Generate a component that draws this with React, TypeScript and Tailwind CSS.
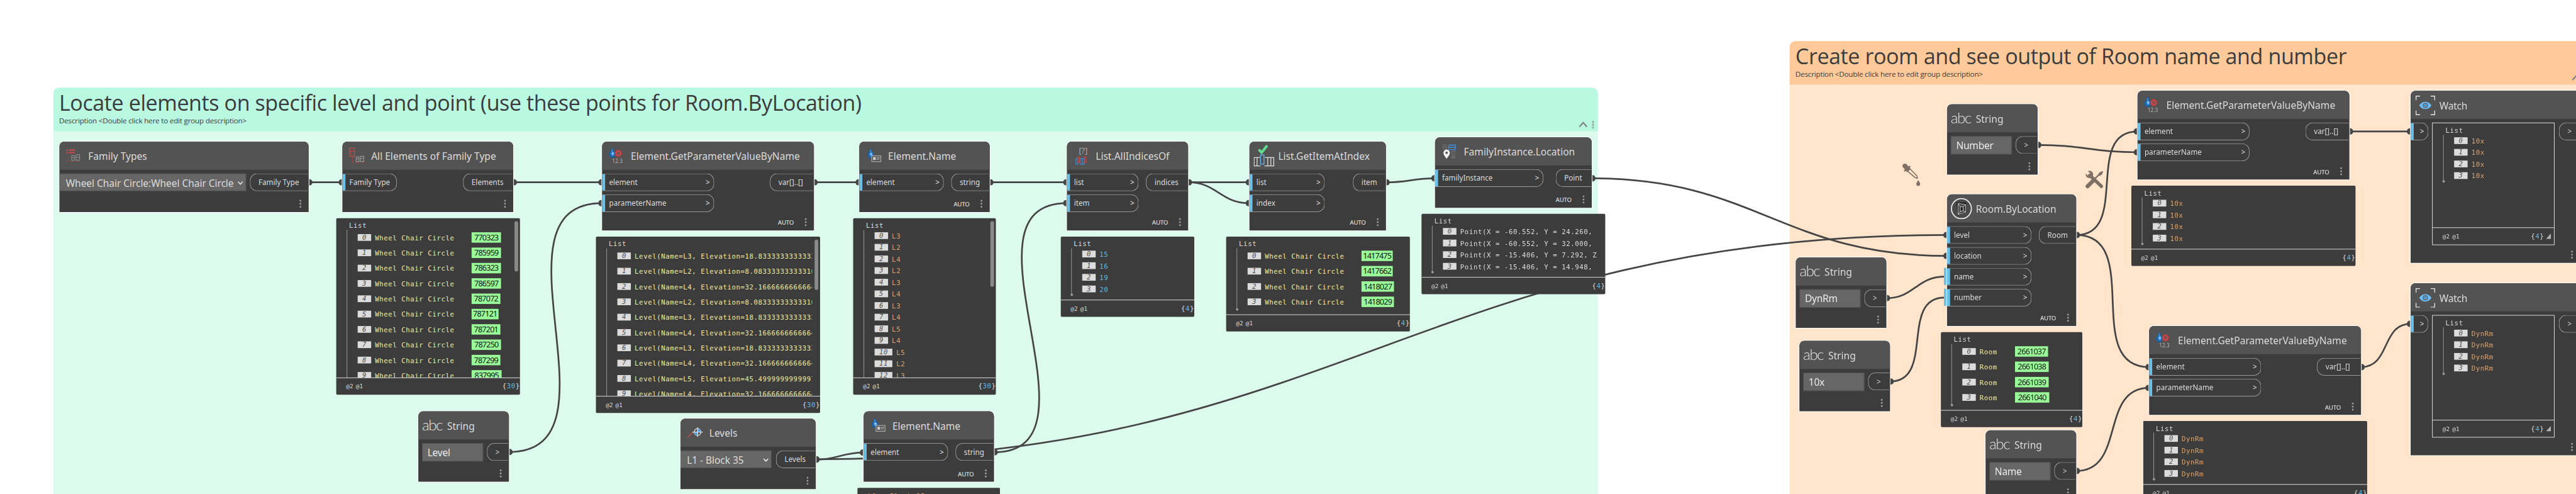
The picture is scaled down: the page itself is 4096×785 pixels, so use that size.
import React from "react";

/* ---------- icons ---------- */

const Vase = () => (
  <>
    <path d="M2.800 0h5.600v1.600h-.8v2.600c2.200 1 3.600 2.700 3.600 5.200 0 2.800-1.400 5-3.400 6H3.600C1.500 14.400.2 12.200.2 9.400c0-2.500 1.400-4.200 3.400-5.200V1.600h-.8z" fill="#1d5f9f" />
    <path d="M4.600 1.500h1.800v4H4.600z" fill="#4a90cf" />
    <ellipse cx="6.200" cy="8.800" rx="2.900" ry="3.600" fill="#3f8fd6" />
    <ellipse cx="6.600" cy="8.400" rx="1.300" ry="1.700" fill="#a9d4f7" />
  </>
);

const FamilyTypesIcon = () => (
  <svg width="24" height="22" viewBox="0 0 24 22" fill="none">
    <path d="M0 2h3M4.500 2h10M0 6h2.500M4.500 6h9.500" stroke="#cf4a4a" strokeWidth="2" />
    <path d="M2.500 8v12M2.500 20.500h20.500" stroke="#a84545" strokeWidth="1" strokeDasharray="1.500 1" />
    <path d="M9 11h4.500v7.500H9zM9 14.500h4.500M16 9.500h6v9h-6zM16 13.500h6" stroke="#8d8d8d" strokeWidth="1.200" />
  </svg>
);

const AllElementsIcon = () => (
  <svg width="26" height="26" viewBox="0 0 26 26" fill="none">
    <path d="M.7.7h8v13.200h-8zM.7 5.500h8M3 8v3" stroke="#cf4a4a" strokeWidth="1.300" />
    <path d="M5.500 15v9M5.500 24.300H25" stroke="#c04848" strokeWidth="1" strokeDasharray="1.500 1" />
    <path d="M11.500 15h4.500v7.500h-4.500zM11.500 18.500H16M18.500 14h5.500v8.500h-5.500zM18.500 17.500H24" stroke="#999" strokeWidth="1.200" />
  </svg>
);

const GetParameterIcon = () => (
  <svg width="24" height="25" viewBox="0 0 24 25" fill="none">
    <Vase />
    <circle cx="15.500" cy="8.200" r="5.300" stroke="#c9393c" strokeWidth="2" strokeDasharray="2.100 2.060" />
    <circle cx="15.500" cy="8.200" r="3.500" fill="#535353" stroke="#d9464a" strokeWidth="2" />
    <circle cx="15.500" cy="8.200" r="1" fill="#d9464a" />
    <text x="5.500" y="23.500" fontSize="8.500" fill="#b5b5b5" fontFamily="Noto Sans, sans-serif" textLength="17">12.3</text>
  </svg>
);

const ElementNameIcon = () => (
  <svg width="24" height="22" viewBox="0 0 24 22" fill="none">
    <Vase />
    <path d="M7.300 11.300h14.800v9.400H7.300z" fill="#535353" stroke="#a8a8a8" strokeWidth="1.300" />
    <path d="M9.500 13.500h4.500v4.500H9.500z" fill="#cfcfcf" />
    <path d="M15.500 14.500h5M15.500 17h4" stroke="#cfcfcf" />
  </svg>
);

const AllIndicesIcon = () => (
  <svg width="22" height="31" viewBox="0 0 22 31" fill="none">
    <text x="5.500" y="11.500" fontSize="12" fill="#b0b0b0" fontFamily="Noto Sans, sans-serif" textLength="14">[?]</text>
    <path d="M.8 20h3v9h-3zM7.500 20h3.500v9H7.500zM11 20h3.500v9H11z" stroke="#3f8fd6" strokeWidth="1.300" />
    <path d="M4 17h3v9H4zM14 17h3v9h-3z" stroke="#cc4444" strokeWidth="1.300" />
  </svg>
);

const GetItemIcon = () => (
  <svg width="34" height="36" viewBox="0 0 34 36" fill="none">
    <path d="M8.300 8l4.700 5L22 1.500" stroke="#5fe08f" strokeWidth="4" />
    <path d="M11 34.700H.7V21h9.500M5.500 21v13.700M17.500 34.700h15.300V21H18.500M23 21v13.700M28 21v13.700" stroke="#e0e0e0" strokeWidth="1.300" />
    <path d="M11.200 17h5.600v14.800h-5.600z" stroke="#6ab8f5" strokeWidth="1.300" />
  </svg>
);

const LocationIcon = () => (
  <svg width="24" height="25" viewBox="0 0 24 25" fill="none">
    <path d="M1.500 1.500H7v7H1.500zM1.500 5H7M15.500 12h5v4.500h-5zM15.500 19h5v4h-5zM15.500 21h5" stroke="#757575" />
    <path d="M10.700 1.700h10.600v7.600H10.700zM10.700 5.500h10.600" stroke="#3f8fd6" strokeWidth="1.400" />
    <path d="M7 9.200a5.200 5.200 0 0 1 5.200 5.200c0 3.400-3.200 6-5.200 10-2-4-5.200-6.600-5.200-10A5.200 5.200 0 0 1 7 9.200z" fill="#f4f4f4" />
    <circle cx="7" cy="14.200" r="2" fill="#555" />
  </svg>
);

const LevelsIcon = () => (
  <svg width="26" height="18" viewBox="0 0 26 18" fill="none">
    <path d="M.5 17L9 8.500" stroke="#c05050" strokeWidth="1.400" />
    <circle cx="17" cy="8" r="5.500" fill="#555" stroke="#ddd" strokeWidth="1.300" />
    <path d="M17 2.500a5.500 5.500 0 0 1 5.500 5.500H17zM17 13.500A5.500 5.500 0 0 1 11.500 8H17z" fill="#3f9bea" />
    <path d="M8.500 8h17M17 0v16" stroke="#e4e4e4" strokeWidth="1.300" />
  </svg>
);

const RoomIcon = () => (
  <svg width="35" height="35" viewBox="0 0 35 35" fill="none">
    <circle cx="17.500" cy="17.500" r="16.300" fill="#4a4a4a" stroke="#ececec" strokeWidth="1.800" />
    <path d="M10.500 8.500h14v14L12 27z" fill="#3a3a3a" stroke="#222" strokeWidth="2" />
    <path d="M12 9l12.500 2v12l-12.500 4z" stroke="#c9c9c9" strokeWidth="1" />
    <path d="M15.500 14h5v7l-5 1.500zM12 9l3.500 5M24.500 11l-4 3M24.500 23l-4-2M12 27l3.500-4.500" stroke="#c9c9c9" strokeWidth="1" />
    <path d="M18 15.500v4.500" stroke="#111" strokeWidth="1.800" />
  </svg>
);

const WatchIcon = () => (
  <svg width="32" height="32" viewBox="0 0 32 32" fill="none">
    <path d="M.8 7.500V.8h6.500M24.700.8h6.500v6.700M31.200 24.500v6.700h-6.500M7.300 31.200H.8v-6.700" stroke="#e2e2e2" strokeWidth="1.400" />
    <path d="M6 16c2.500-4 6-6 10-6s7.500 2 10 6c-2.500 4-6 6-10 6s-7.500-2-10-6z" fill="#6cbcf5" />
    <circle cx="16" cy="16" r="3.500" fill="#6cbcf5" stroke="#535353" strokeWidth="1.300" />
    <circle cx="16" cy="16" r="1.300" stroke="#535353" />
  </svg>
);

const Abc = () => (
  <span className="pb-[3px] font-['Lato'] text-[25px] leading-none font-light tracking-[-1.6px] text-[#e2e2e2]">abc</span>
);

/* ---------- node parts ---------- */

const Chevron = () => (
  <svg width="9" height="8" viewBox="0 0 9 8" fill="none">
    <path d="M.8 1.500l3.700 4 3.700-4" stroke="#f0f0f0" strokeWidth="1.500" />
  </svg>
);

const InPort = ({ label, arrow = true, width }: { label?: string; arrow?: boolean; width: number }) => (
  <div style={{ width }} className="flex h-[29px] items-center overflow-hidden rounded-r-[12px] border border-l-0 border-[#9b9b9b] pr-[6px]">
    <span className="h-full w-[5px] shrink-0 bg-[#6ac0e7]" />
    {label && <span className="ml-[6.500px] whitespace-nowrap">{label}</span>}
    {arrow && <span className="ml-auto font-medium">&gt;</span>}
  </div>
);

const OutPort = ({ label, width }: { label: string; width: number }) => (
  <div style={{ width: width - 1 }} className="mr-px ml-auto flex h-[29px] shrink-0 items-center rounded-l-[12px] border border-r-0 border-[#9b9b9b] pl-[13px]">
    {label}
  </div>
);

const Dots = () => (
  <span className="flex flex-col gap-[2.300px]">
    <span className="size-[3px] rounded-full bg-[#9c9c9c]" />
    <span className="size-[3px] rounded-full bg-[#9c9c9c]" />
    <span className="size-[3px] rounded-full bg-[#9c9c9c]" />
  </span>
);

type NodeProps = {
  x: number;
  y: number;
  w: number;
  h?: number;
  title: string;
  icon: React.ReactNode;
  iconClass?: string;
  auto?: boolean;
  ins?: string[];
  inW?: number;
  arrows?: boolean;
  out: string;
  outW: number;
  children?: React.ReactNode;
};

function Node({ x, y, w, h = 115, title, icon, iconClass = "pl-[11px]", auto, ins, inW = 0, arrows = true, out, outW, children }: NodeProps) {
  return (
    <section
      style={{ left: x, top: y, width: w, height: h }}
      className="absolute flex flex-col overflow-hidden rounded-t-[8px] bg-[#3c3c3c] text-[12px] leading-none text-[#dcdcdc] ring-1 ring-white"
    >
      <header className="flex h-[46px] shrink-0 items-center bg-[#535353]">
        <span className={`flex w-[47px] shrink-0 ${iconClass}`}>{icon}</span>
        <h2 className="pt-px text-[16px] leading-none whitespace-nowrap">{title}</h2>
      </header>
      <div className="flex items-start pt-1.5">
        {ins && (
          <div className="flex flex-col gap-[5px]">
            {ins.map((label) => (
              <InPort key={label} label={label} arrow={arrows} width={inW} />
            ))}
          </div>
        )}
        {children}
        <OutPort label={out} width={outW} />
      </div>
      <footer className="mt-auto flex h-[27px] items-center justify-end pr-[12px]">
        {auto && <span className="mr-[18px] text-[10px] font-medium tracking-[-0.300px]">AUTO</span>}
        <Dots />
      </footer>
    </section>
  );
}

const StringNode = ({ x, y, value }: { x: number; y: number; value: string }) => (
  <Node x={x} y={y} w={148} title="String" icon={<Abc />} iconClass="pl-[6px]" out=">" outW={36}>
    <div className="ml-[6px] flex h-[30px] w-[100px] items-center border border-[#4e4e4e] bg-[#666] pl-[8px] text-[16px] tracking-[-0.300px] text-[#ececec]">
      {value}
    </div>
  </Node>
);

const Select = ({ value, width }: { value: string; width: number }) => (
  <div style={{ width }} className="flex h-[29px] items-center justify-between border border-l-0 border-[#4e4e4e] bg-[#666] pt-[2px] pr-[4px] pl-[10.500px] text-[16px] tracking-[-0.080px] whitespace-nowrap">
    {value}
    <Chevron />
  </div>
);

/* ---------- value lists ---------- */

type Row = { text: string; id?: string; idW?: number };

const TONES = { yellow: "text-[#efed9e]", orange: "text-[#dba36d]", blue: "text-[#5fb8e6]", plain: "text-[#dcdcdc]" };

type ListProps = {
  rows: Row[];
  count: number;
  tone: keyof typeof TONES;
  tall?: boolean;
  scroll?: number;
  idX?: number;
  bodyH?: number;
  grip?: boolean;
};

function ValueList({ rows, count, tone, tall, scroll, idX = 158, bodyH, grip }: ListProps) {
  const rowH = tall ? 25 : 19;
  const height = bodyH ?? (scroll ? 260 : 27 + rows.length * rowH);
  return (
    <div className="relative flex flex-col font-['DejaVu_Sans_Mono'] text-[11px] leading-none tracking-[0.580px] text-[#dcdcdc]">
      <div style={{ height }} className={`overflow-hidden ${scroll ? "mr-[13px]" : ""}`}>
        <div className="flex h-[19px] items-end pb-px pl-[21px]">List</div>
        <div className="relative ml-[17px] border-l border-[#9a9a9a]">
          {rows.map((row, i) => (
            <div key={i} style={{ height: rowH }} className="relative flex items-center pl-[17px] whitespace-nowrap">
              <span className="flex h-[11px] items-center bg-[#dcdcdc] px-[7.500px] text-[#505050] italic">{i}</span>
              <span className={`pt-px pl-[6px] ${TONES[tone]}`}>{row.text}</span>
              {row.id && (
                <span
                  style={{ left: idX + 45, width: row.idW }}
                  className="absolute top-1 flex h-[17px] items-center justify-center bg-[#98fb98] pb-px font-['Noto_Sans'] text-[13px] tracking-[-0.850px] text-[#151515]"
                >
                  {row.id}
                </span>
              )}
            </div>
          ))}
          {!scroll && <span className="absolute -bottom-[2px] -left-[2.500px] size-1 rounded-full bg-[#9a9a9a]" />}
        </div>
      </div>
      <div className="flex h-[28px] items-center justify-between border-t border-[#dedede] pl-[16px]">
        <span className="flex gap-[4px] text-[9.500px] tracking-[0.200px]">
          <span>@2</span>
          <span>@1</span>
        </span>
        <span className="flex items-center">
          <span>
            {"{"}
            <span className="text-[#5fb8e6]">{count}</span>
            {"}"}
          </span>
          {grip && (
            <svg width="8" height="9" viewBox="0 0 8 9" className="mr-[5px] ml-[3px]">
              <path d="M8 0v9H0z" fill="#b4b4b4" />
            </svg>
          )}
        </span>
      </div>
      {scroll && <span style={{ height: scroll }} className="absolute top-[5px] right-[3px] w-[6px] rounded-full bg-[#8a8a8a]" />}
    </div>
  );
}

const Preview = ({ x, y, w, ...list }: ListProps & { x: number; y: number; w: number }) => (
  <div style={{ left: x, top: y, width: w }} className="absolute overflow-hidden rounded-[2px] bg-[#3c3c3c]">
    <ValueList {...list} />
  </div>
);

function Watch({ x, y, rows }: { x: number; y: number; rows: Row[] }) {
  return (
    <section
      style={{ left: x, top: y }}
      className="absolute flex h-[281px] w-[277px] flex-col overflow-hidden rounded-t-[8px] bg-[#3c3c3c] text-[12px] leading-none text-[#dcdcdc] ring-1 ring-white"
    >
      <header className="flex h-[46px] shrink-0 items-center bg-[#535353]">
        <span className="flex w-[47px] pt-px pl-[8px]">
          <WatchIcon />
        </span>
        <h2 className="pt-[3px] text-[16px] leading-none tracking-[-0.300px]">Watch</h2>
      </header>
      <div className="flex items-start pt-1.5">
        <InPort width={29} />
        <div className="ml-[6px] w-[200px] border border-[#dedede]">
          <ValueList rows={rows} count={4} tone="orange" bodyH={170} grip />
        </div>
        <OutPort label=">" width={35} />
      </div>
      <footer className="mt-auto flex h-[27px] items-center justify-end pr-[12px]">
        <Dots />
      </footer>
    </section>
  );
}

/* ---------- groups ---------- */

type GroupProps = { x: number; y: number; w: number; title: string; frame: string; bar: string };

const Group = ({ x, y, w, title, frame, bar }: GroupProps) => (
  <section style={{ left: x, top: y, width: w }} className={`absolute bottom-0 overflow-hidden rounded-t-[10px] text-[#3c3c3c] ${frame}`}>
    <header className={`flex h-[71px] justify-between pr-[6px] pl-[9.500px] font-['Open_Sans'] ${bar}`}>
      <div>
        <h1 className="mt-px text-[35px] leading-[47px] tracking-[-0.440px] whitespace-nowrap">{title}</h1>
        <p className="text-[12px] leading-[12px] tracking-[-0.220px] whitespace-nowrap">Description &lt;Double click here to edit group description&gt;</p>
      </div>
      <div className="mt-[54px] flex gap-[7px]">
        <svg width="14" height="12" viewBox="0 0 14 12" fill="none">
          <path d="M.8 9.800L7 3.200l6.200 6.600" stroke="#858585" strokeWidth="2.300" />
        </svg>
        <svg width="4" height="14" viewBox="0 0 4 14" fill="none" stroke="#777" strokeWidth=".8">
          <circle cx="2" cy="2" r="1.300" />
          <circle cx="2" cy="6.500" r="1.300" />
          <circle cx="2" cy="11" r="1.300" />
        </svg>
      </div>
    </header>
  </section>
);

/* ---------- wires ---------- */

const WIRES: [number, number, number, number][] = [
  [504, 297.5, 559, 297.5],
  [838, 297.5, 983, 297.5],
  [831, 737.5, 983, 331.5],
  [1329, 297.5, 1403, 297.5],
  [1616, 297.5, 1742, 297.5],
  [1623, 738, 1742, 331.5],
  [1332, 750, 1410, 738.5],
  [1332, 749.5, 3179, 383.5],
  [1940, 297.5, 2040, 297.5],
  [1940, 297.5, 2040, 331.5],
  [2263, 297.5, 2343, 291],
  [2599, 291, 3179, 417.5],
  [3327, 236.5, 3490, 248.5],
  [3390, 383.5, 3490, 214.5],
  [3390, 383.5, 3509, 599],
  [3390, 768.5, 3509, 633],
  [3836, 214.5, 3936, 214.5],
  [3855, 599, 3936, 528.5],
  [3080, 486.5, 3175, 451.5],
  [3086, 622.5, 3175, 485.5],
];

const FLAG_X = 3175;

const Wires = () => (
  <svg width="4206" height="806" viewBox="0 0 4206 806" fill="none" className="absolute inset-0">
    {WIRES.map(([x0, y0, x1, y1], i) => {
      const pull = 0.45 * Math.hypot(x1 - x0, y1 - y0);
      return (
        <g key={i}>
          <path d={`M${x0} ${y0}C${x0 + pull} ${y0} ${x1 - pull} ${y1} ${x1} ${y1}`} stroke="#454545" strokeWidth="2.800" />
          <circle cx={x0 + 1} cy={y0} r="5.200" fill="#454545" />
          {x1 !== FLAG_X && <circle cx={x1 - 1} cy={y1} r="5.200" fill="#454545" />}
        </g>
      );
    })}
    <path d="M3176 437v28M3176 471v28" stroke="#6ac0e7" strokeWidth="4" />
  </svg>
);

/* ---------- data ---------- */

const WHEEL_IDS: [string, number][] = [
  ["770323", 48], ["785959", 48], ["786323", 48], ["786597", 48], ["787072", 47],
  ["787121", 44], ["787201", 47], ["787250", 48], ["787299", 47], ["837995", 49],
];
const wheel = (ids: [string, number][]): Row[] => ids.map(([id, idW]) => ({ text: "Wheel Chair Circle", id, idW }));

const L2 = "Level(Name=L2, Elevation=8.08333333333310)";
const L3 = "Level(Name=L3, Elevation=18.8333333333333)";
const L4 = "Level(Name=L4, Elevation=32.1666666666664)";
const L5 = "Level(Name=L5, Elevation=45.4999999999997)";
const rows = (...texts: string[]): Row[] => texts.map((text) => ({ text }));

export default function App() {
  return (
    <main className="h-[785px] w-[4096px] overflow-hidden bg-white font-['Noto_Sans',sans-serif]">
      <div className="relative h-[806px] w-[4206px] origin-top-left scale-[0.97385]">
        <Group x={87} y={143} w={2522} title="Locate elements on specific level and point (use these points for Room.ByLocation)" frame="bg-[#dcfbee]" bar="bg-[#b9f8e1]" />
        <Group x={2922} y={67} w={1308} title="Create room and see output of Room name and number" frame="bg-[#fee5cc]" bar="bg-[#ffc999]" />

        <svg width="30" height="38" viewBox="0 0 30 38" fill="none" className="absolute top-[266px] left-[3106px]">
          <path d="M1.500 2c1.800-1.800 4.500-1.300 6 .5l2.700 3.400 2-1.700 1.600 2-1.700 1.500 1.800 2.200-6.200 5-1.800-2.200-2 1.500-1.600-2 2-1.600L1 7C-.3 5.300.2 3.200 1.500 2z" fill="#7f7065" />
          <path d="M8 13l13 10.800 3.500 1-.5-3.600L12.500 9.500" stroke="#7f7065" strokeWidth="1.600" />
          <path d="M26 28c2 3 3.200 4.600 3.200 6.200a3.200 3.200 0 0 1-6.400 0c0-1.600 1.200-3.200 3.200-6.200z" fill="#7f7065" />
        </svg>
        <Wires />
        <svg width="30" height="30" viewBox="0 0 30 30" fill="none" className="absolute top-[278px] left-[3405px]">
          <path d="M3.500 26L12 17.500" stroke="#7f7065" strokeWidth="6.500" strokeLinecap="round" />
          <path d="M14 15l9-9" stroke="#7f7065" strokeWidth="2.400" />
          <path d="M21 7.500l1.500-4L28 1l1 1-2.500 5.500-4 1.500z" fill="#7f7065" />
          <path d="M7 8l19 18" stroke="#7f7065" strokeWidth="5.500" strokeLinecap="round" />
          <path d="M4 1.300l4.500 4-1 3-3 1L.8 5.200C-.4 9 2.500 13 7 12.500c4-.6 6-3.500 5.500-7C12 2 8-.3 4 1.300z" fill="#7f7065" />
        </svg>

        <Node x={97} y={231} w={407} title="Family Types" icon={<FamilyTypesIcon />} out="Family Type" outW={96}>
          <Select value="Wheel Chair Circle:Wheel Chair Circle" width={305} />
        </Node>

        <Node x={559} y={231} w={279} title="All Elements of Family Type" icon={<AllElementsIcon />} ins={["Family Type"]} inW={89} arrows={false} out="Elements" outW={82} />
        <Preview x={549} y={356} w={300} rows={wheel(WHEEL_IDS)} count={30} tone="yellow" tall scroll={82} />

        <Node x={983} y={231} w={346} h={145} auto title="Element.GetParameterValueByName" icon={<GetParameterIcon />} ins={["element", "parameterName"]} inW={183} out="var[]..[]" outW={72} />
        <Preview x={973} y={386} w={366} rows={rows(L3, L2, L4, L2, L3, L4, L3, L4, L5, L4)} count={30} tone="yellow" tall scroll={82} />

        <Node x={1403} y={231} w={213} auto title="Element.Name" icon={<ElementNameIcon />} iconClass="pl-[13px]" ins={["element"]} inW={138} out="string" outW={63} />
        <Preview x={1393} y={356} w={233} rows={rows("L3", "L2", "L4", "L2", "L3", "L4", "L3", "L4", "L5", "L4", "L5", "L2", "L3")} count={30} tone="orange" scroll={107} />

        <Node x={1742} y={231} w={198} h={145} auto title="List.AllIndicesOf" icon={<AllIndicesIcon />} iconClass="pl-[14px]" ins={["list", "item"]} inW={117} out="indices" outW={69} />
        <Preview x={1732} y={386} w={218} rows={rows("15", "16", "19", "20")} count={4} tone="blue" />

        <Node x={2040} y={231} w={223} h={145} auto title="List.GetItemAtIndex" icon={<GetItemIcon />} iconClass="pl-[7px]" ins={["list", "index"]} inW={123} out="item" outW={54} />
        <Preview x={2002} y={386} w={300} rows={wheel([["1417475", 51], ["1417662", 51], ["1418027", 53], ["1418029", 53]])} count={4} tone="yellow" tall />

        <Node x={2343} y={224} w={256} auto title="FamilyInstance.Location" icon={<LocationIcon />} iconClass="pl-[12px]" ins={["familyInstance"]} inW={177} out="Point" outW={59} />
        <Preview
          x={2321}
          y={349}
          w={300}
          rows={rows("Point(X = -60.552, Y = 24.260,", "Point(X = -60.552, Y = 32.000,", "Point(X = -15.406, Y = 7.292, Z", "Point(X = -15.406, Y = 14.948,")}
          count={4}
          tone="plain"
        />

        <StringNode x={683} y={671} value="Level" />
        <Node x={1111} y={683} w={221} title="Levels" icon={<LevelsIcon />} out="Levels" outW={65}>
          <Select value="L1 - Block 35" width={149} />
        </Node>
        <Node x={1410} y={671} w={213} auto title="Element.Name" icon={<ElementNameIcon />} iconClass="pl-[13px]" ins={["element"]} inW={138} out="string" outW={63} />
        <div className="absolute top-[796px] left-[1400px] h-[60px] w-[233px] rounded-[2px] bg-[#3c3c3c] pt-[7px] pl-[17px] font-['DejaVu_Sans_Mono'] text-[11px] leading-[13px] tracking-[0.580px] text-[#dba36d]">
          L1 - Block 35
        </div>

        <StringNode x={3179} y={170} value="Number" />
        <StringNode x={2932} y={420} value="DynRm" />
        <StringNode x={2938} y={556} value="10x" />
        <Node x={3179} y={317} w={211} h={215} auto title="Room.ByLocation" icon={<RoomIcon />} iconClass="pl-[6px]" ins={["level", "location", "name", "number"]} inW={138} out="Room" outW={61} />
        <Preview x={3169} y={542} w={231} rows={["2661037", "2661038", "2661039", "2661040"].map((id, i) => ({ text: "Room", id, idW: [54, 55, 55, 56][i] }))} idX={58} count={4} tone="yellow" tall />
        <StringNode x={3242} y={702} value="Name" />

        <Node x={3490} y={148} w={346} h={145} auto title="Element.GetParameterValueByName" icon={<GetParameterIcon />} ins={["element", "parameterName"]} inW={183} out="var[]..[]" outW={72} />
        <Preview x={3480} y={303} w={366} rows={rows("10x", "10x", "10x", "10x")} count={4} tone="orange" />
        <Node x={3509} y={532} w={346} h={145} auto title="Element.GetParameterValueByName" icon={<GetParameterIcon />} ins={["element", "parameterName"]} inW={183} out="var[]..[]" outW={72} />
        <Preview x={3499} y={687} w={366} rows={rows("DynRm", "DynRm", "DynRm", "DynRm")} count={4} tone="orange" />

        <Watch x={3936} y={148} rows={rows("10x", "10x", "10x", "10x")} />
        <Watch x={3936} y={462} rows={rows("DynRm", "DynRm", "DynRm", "DynRm")} />
      </div>
    </main>
  );
}
